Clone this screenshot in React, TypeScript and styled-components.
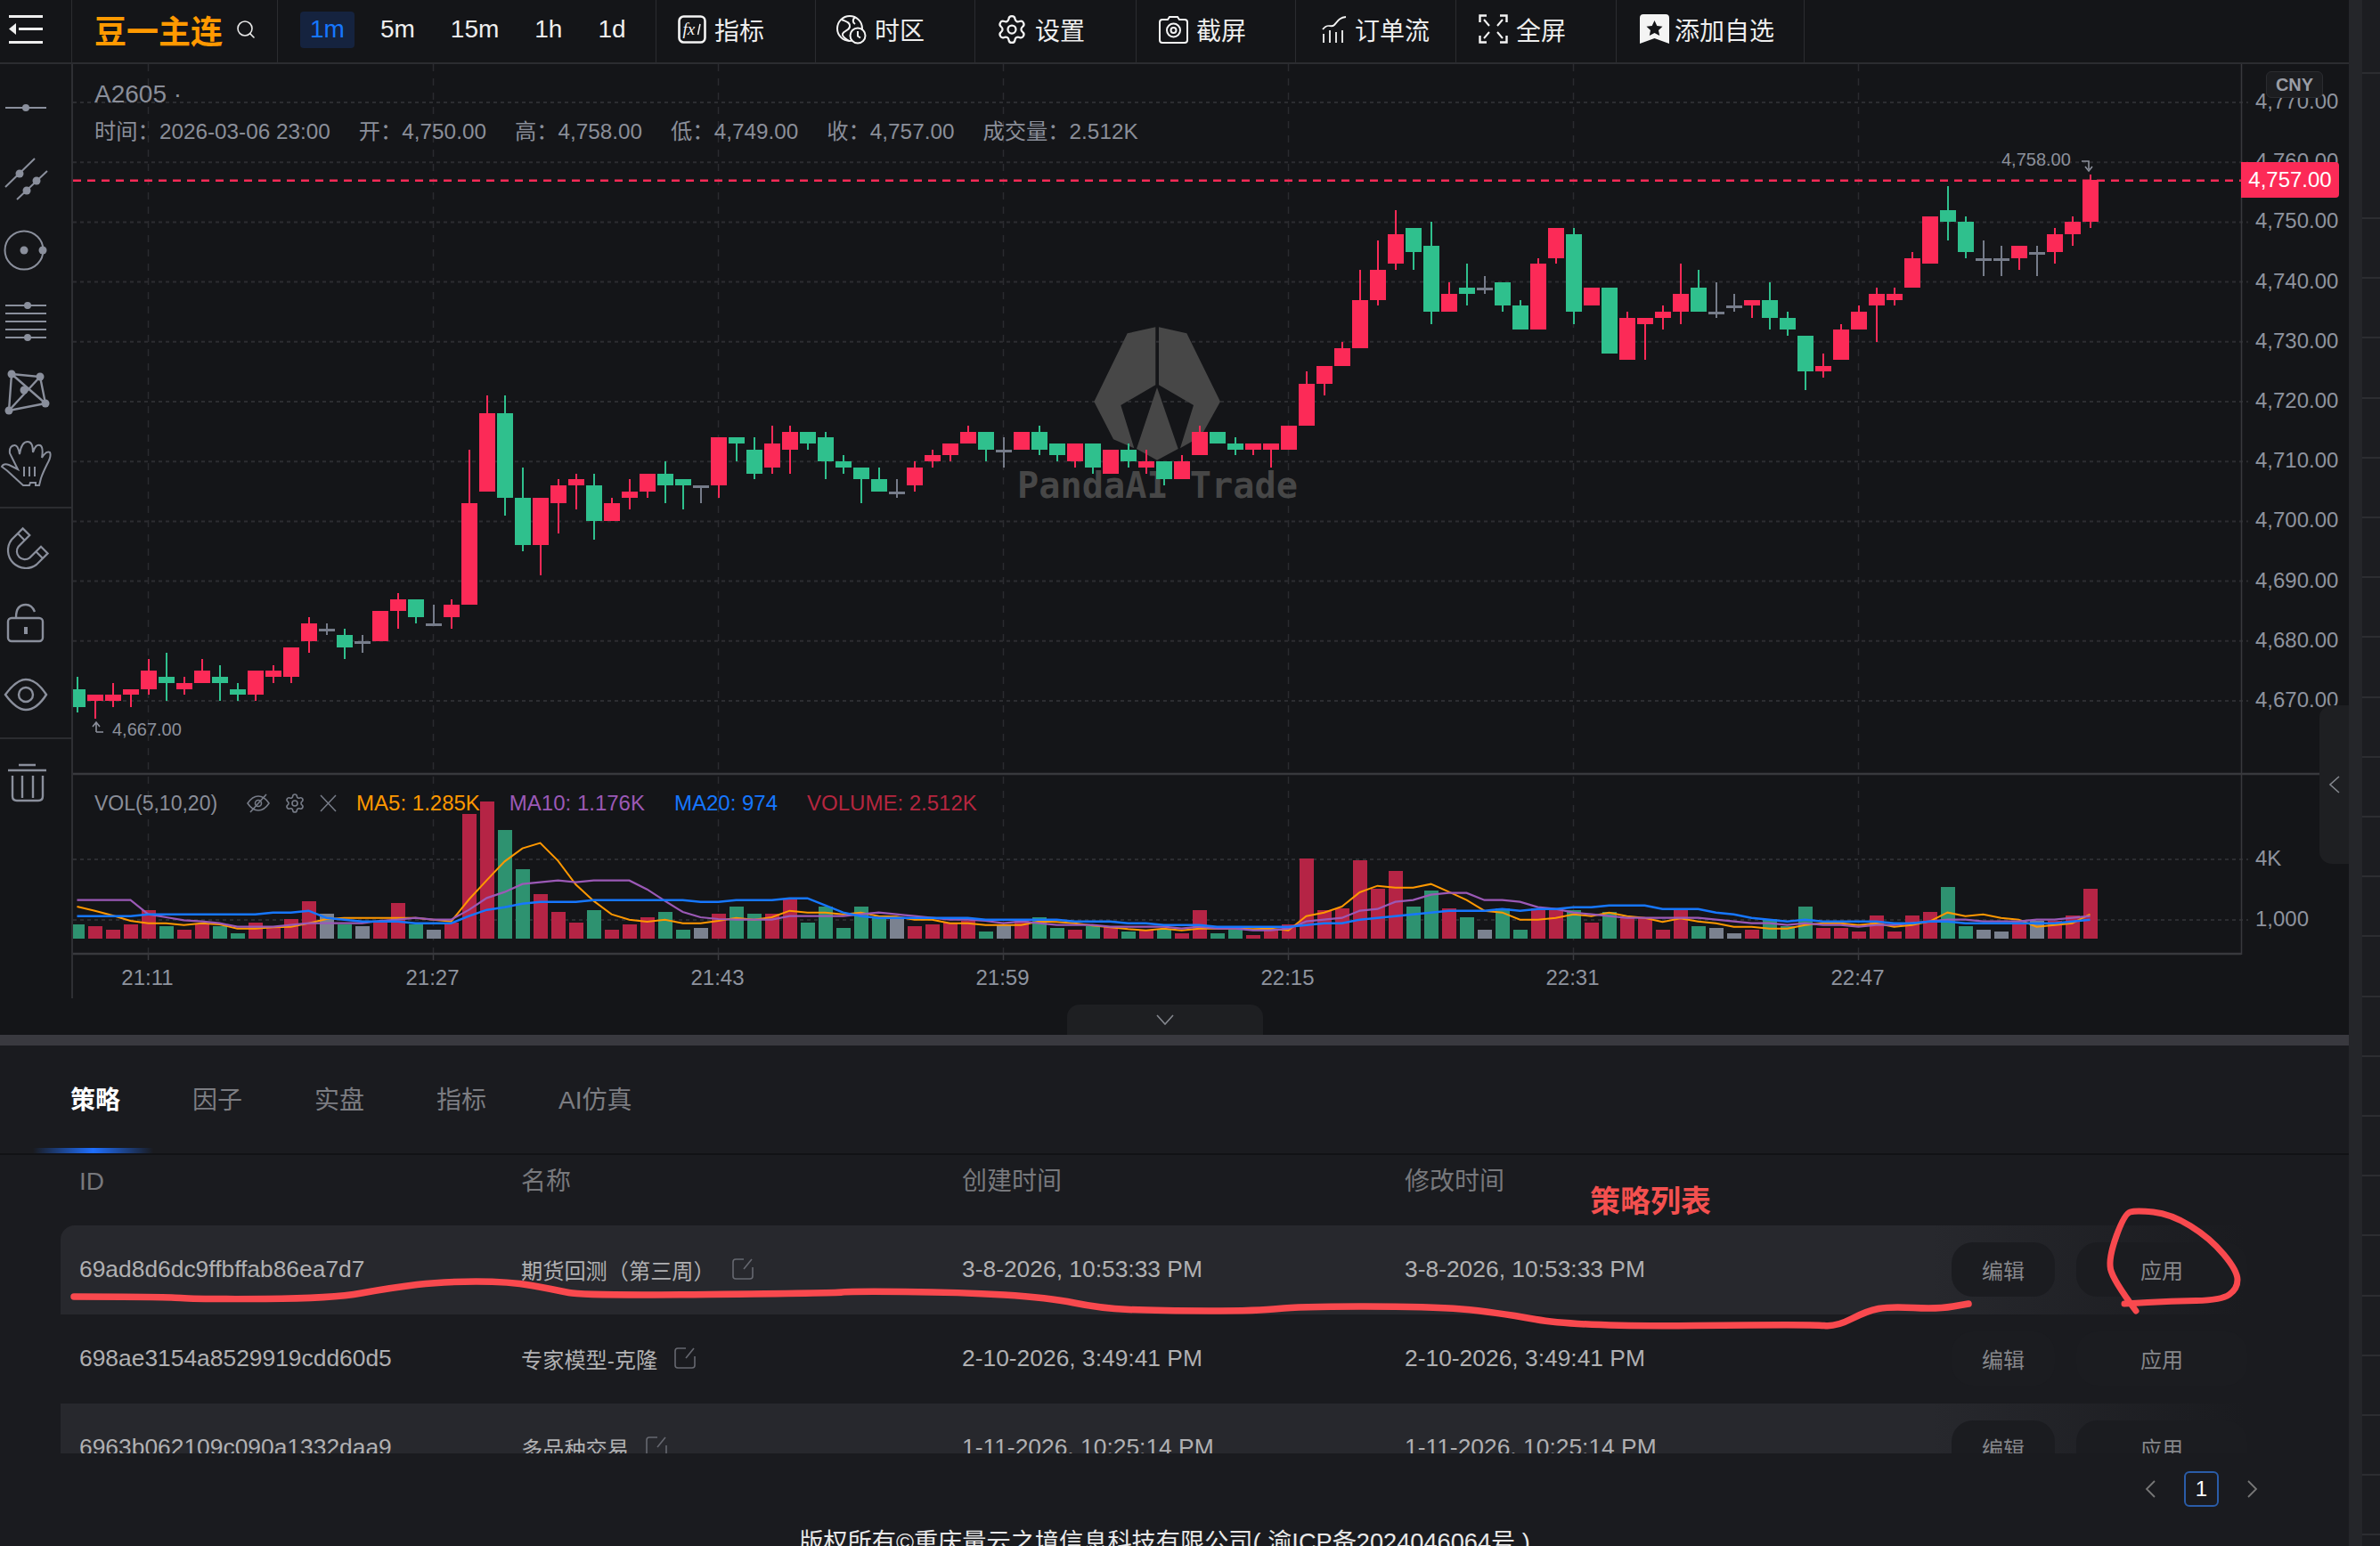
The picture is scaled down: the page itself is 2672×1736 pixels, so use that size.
import React from "react";
import styled, { createGlobalStyle } from "styled-components";
import { Search, Settings } from "lucide-react";

const FONT = `"Liberation Sans", "Noto Sans CJK SC", sans-serif`;
const UP = "#fc2a57";
const DOWN = "#2fc08d";
const FLAT = "#767c8a";
const VOL_COLORS: Record<string, string> = { r: "#b52445", g: "#2e9270", n: "#7b8290" };
const CANDLE_COLORS: Record<string, string> = { r: UP, g: DOWN, n: FLAT };

// [colour, body top, body bottom, high, low], in price units above 4670
type Candle = [string, number, number, number, number];
const candles: Candle[] = [
    ["g", 2, -1, 4, -2], ["r", 1, 0, 1, -3], ["r", 1, 0, 3, -1], ["r", 2, 1, 2, -1], ["r", 5, 2, 7, 1],
    ["g", 4, 3, 8, 0], ["r", 3, 2, 4, 1], ["r", 5, 3, 7, 3], ["g", 4, 3, 6, 0], ["g", 2, 1, 3, 0],
    ["r", 5, 1, 5, 0], ["r", 5, 4, 6, 3], ["r", 9, 4, 9, 3], ["r", 13, 10, 14, 8], ["n", 12, 12, 13, 11],
    ["g", 11, 9, 12, 7], ["n", 10, 10, 11, 8], ["r", 15, 10, 15, 10], ["r", 17, 15, 18, 12], ["g", 17, 14, 17, 13],
    ["n", 13, 13, 16, 13], ["r", 16, 14, 17, 12], ["r", 33, 16, 42, 16], ["r", 48, 35, 51, 35], ["g", 48, 34, 51, 31],
    ["g", 34, 26, 39, 25], ["r", 34, 26, 34, 21], ["r", 36, 33, 37, 28], ["r", 37, 36, 38, 32], ["g", 36, 30, 38, 27],
    ["r", 33, 30, 34, 30], ["r", 35, 34, 37, 32], ["r", 38, 35, 38, 34], ["g", 38, 36, 40, 33], ["g", 37, 36, 37, 32],
    ["n", 36, 36, 36, 33], ["r", 44, 36, 44, 34], ["g", 44, 43, 44, 40], ["g", 42, 38, 44, 37], ["r", 43, 39, 46, 38],
    ["r", 45, 42, 46, 38], ["g", 45, 43, 45, 42], ["g", 44, 40, 45, 37], ["g", 40, 39, 41, 38], ["g", 39, 37, 39, 33],
    ["g", 37, 35, 39, 35], ["n", 35, 35, 37, 34], ["r", 39, 36, 40, 35], ["r", 41, 40, 42, 39], ["r", 43, 41, 43, 40],
    ["r", 45, 43, 46, 43], ["g", 45, 42, 45, 40], ["n", 42, 42, 44, 39], ["r", 45, 42, 45, 42], ["g", 45, 42, 46, 41],
    ["g", 43, 41, 43, 40], ["r", 43, 40, 43, 39], ["g", 43, 39, 43, 38], ["r", 42, 38, 42, 38], ["g", 42, 40, 43, 39],
    ["r", 40, 39, 42, 38], ["g", 40, 37, 40, 36], ["r", 40, 37, 41, 37], ["r", 45, 41, 46, 41], ["g", 45, 43, 45, 43],
    ["g", 43, 42, 44, 41], ["r", 43, 42, 43, 41], ["r", 43, 42, 43, 39], ["r", 46, 42, 46, 42], ["r", 53, 46, 55, 46],
    ["r", 56, 53, 56, 51], ["r", 59, 56, 60, 56], ["r", 67, 59, 72, 59], ["r", 72, 67, 77, 66], ["r", 78, 73, 82, 72],
    ["g", 79, 75, 79, 72], ["g", 76, 65, 80, 63], ["r", 68, 65, 70, 65], ["g", 69, 68, 73, 66], ["n", 69, 69, 71, 68],
    ["g", 70, 66, 70, 65], ["g", 66, 62, 67, 62], ["r", 73, 62, 74, 62], ["r", 79, 74, 79, 73], ["g", 78, 65, 79, 63],
    ["r", 69, 66, 69, 66], ["g", 69, 58, 69, 58], ["r", 64, 57, 65, 57], ["r", 64, 63, 64, 57], ["r", 65, 64, 66, 62],
    ["r", 68, 65, 73, 63], ["g", 69, 65, 72, 65], ["n", 65, 65, 70, 64], ["n", 66, 66, 68, 65], ["r", 67, 66, 67, 64],
    ["g", 67, 64, 70, 62], ["g", 64, 62, 65, 61], ["g", 61, 55, 61, 52], ["r", 56, 55, 58, 54], ["r", 62, 57, 63, 57],
    ["r", 65, 62, 66, 62], ["r", 68, 66, 69, 60], ["r", 68, 67, 69, 66], ["r", 74, 69, 75, 69], ["r", 81, 73, 81, 73],
    ["g", 82, 80, 86, 77], ["g", 80, 75, 81, 74], ["n", 74, 74, 77, 71], ["n", 74, 74, 76, 71], ["r", 76, 74, 76, 72],
    ["n", 75, 75, 76, 71], ["r", 78, 75, 79, 73], ["r", 80, 78, 81, 76], ["r", 87, 80, 88, 79],
];

const volumes = [
    16, 14, 10, 16, 32, 14, 10, 16, 14, 6, 18, 12, 22, 42, 28, 16, 14, 20, 40, 16, 10, 18, 140, 154, 122, 78, 50, 30, 18, 32,
    10, 16, 24, 30, 10, 12, 28, 36, 28, 28, 44, 18, 36, 12, 36, 24, 22, 14, 16, 18, 20, 8, 16, 20, 24, 12, 10, 14, 14, 8,
    10, 10, 6, 32, 6, 10, 4, 10, 16, 90, 32, 34, 88, 56, 76, 36, 54, 34, 24, 10, 34, 10, 34, 34, 32, 18, 30, 24, 24, 10,
    32, 14, 12, 6, 10, 22, 14, 36, 12, 12, 8, 26, 8, 26, 30, 58, 14, 10, 8, 20, 20, 20, 26, 56,
];

// moving averages, y = 880 + value / 3, one value per candle
const ma5 = [
    414, 428, 444, 462, 470, 470, 476, 470, 474, 488, 488, 484, 482, 470, 456, 452, 452, 452, 452, 452, 458, 464, 390, 325, 262, 218, 200, 260, 340, 395,
    440, 458, 465, 458, 470, 470, 462, 452, 458, 450, 428, 434, 434, 440, 434, 446, 448, 458, 458, 470, 470, 476, 476, 476, 464, 466, 470, 478, 484, 490,
    494, 488, 494, 488, 488, 488, 490, 488, 494, 446, 434, 414, 366, 344, 350, 350, 338, 364, 392, 428, 434, 458, 458, 452, 440, 446, 434, 446, 452, 466,
    454, 464, 470, 482, 482, 488, 488, 476, 470, 470, 476, 470, 482, 476, 464, 434, 446, 440, 452, 458, 482, 476, 470, 440,
];
const ma10 = [
    392, 392, 392, 392, 440, 450, 460, 464, 470, 482, 482, 482, 476, 470, 470, 470, 470, 462, 458, 452, 458, 458, 425, 385, 365, 338, 332, 326, 332, 326,
    326, 326, 356, 395, 432, 450, 456, 458, 458, 458, 446, 446, 446, 446, 440, 434, 440, 446, 452, 458, 458, 462, 470, 464, 470, 476, 476, 476, 482, 482,
    482, 482, 488, 482, 488, 488, 494, 494, 488, 464, 458, 452, 428, 422, 398, 392, 374, 368, 368, 392, 392, 398, 416, 422, 434, 440, 446, 452, 452, 452,
    452, 452, 458, 464, 470, 470, 476, 470, 476, 476, 482, 476, 476, 470, 464, 458, 458, 464, 464, 464, 458, 458, 452, 446,
];
const ma20 = [
    446, 446, 446, 446, 440, 440, 440, 440, 440, 440, 440, 434, 434, 428, 452, 458, 464, 464, 464, 470, 470, 470, 446, 425, 416, 404, 398, 398, 398, 392,
    392, 392, 392, 392, 392, 398, 398, 392, 392, 392, 386, 386, 410, 434, 446, 452, 452, 452, 452, 452, 452, 458, 458, 458, 458, 458, 464, 464, 464, 470,
    470, 476, 476, 476, 482, 482, 482, 482, 482, 476, 470, 470, 458, 452, 446, 440, 434, 428, 428, 428, 422, 428, 422, 422, 416, 416, 410, 410, 410, 422,
    422, 422, 434, 440, 452, 458, 464, 458, 464, 464, 464, 464, 470, 470, 464, 464, 470, 470, 470, 470, 470, 470, 464, 458,
];

const candleX = (i: number) => 86.5 + 20 * i;
const priceY = (n: number) => 787 - n * 6.72;
const maPoints = (values: number[]) => values.map((v, i) => `${candleX(i)},${880 + v / 3}`).join(" ");

const smooth = (pts: number[][]) => {
    let d = `M${pts[0][0]} ${pts[0][1]}`;
    for (let i = 1; i < pts.length - 1; i++) {
        const mx = (pts[i][0] + pts[i + 1][0]) / 2;
        const my = (pts[i][1] + pts[i + 1][1]) / 2;
        d += ` Q${pts[i][0]} ${pts[i][1]} ${mx} ${my}`;
    }
    const last = pts[pts.length - 1];
    return `${d} L${last[0]} ${last[1]}`;
};

const underlineStroke = [
    [83, 1456], [182, 1456], [224, 1459], [373, 1458], [439, 1446], [497, 1439], [572, 1439], [622, 1448], [655, 1455],
    [937, 1452], [954, 1450], [1078, 1451], [1177, 1457], [1235, 1469], [1300, 1472], [1414, 1472], [1457, 1467], [1606, 1467],
    [1676, 1473], [1772, 1490], [2035, 1487], [2061, 1490], [2096, 1472], [2122, 1467], [2175, 1470], [2210, 1464],
];
const circleStroke = [
    [2398, 1472], [2372, 1437], [2367, 1413], [2385, 1363], [2398, 1359], [2437, 1363], [2481, 1390], [2512, 1427],
    [2512, 1447], [2494, 1460], [2437, 1461], [2385, 1464],
];

const priceTicks = [4770, 4760, 4750, 4740, 4730, 4720, 4710, 4700, 4690, 4680, 4670];
const timeTicks = [
    [4, "21:11"], [20, "21:27"], [36, "21:43"], [52, "21:59"], [68, "22:15"], [84, "22:31"], [100, "22:47"],
] as [number, string][];

const intervals = ["1m", "5m", "15m", "1h", "1d"];
const tabs = ["策略", "因子", "实盘", "指标", "AI仿真"];
const rows = [
    { id: "69ad8d6dc9ffbffab86ea7d7", name: "期货回测（第三周）", created: "3-8-2026, 10:53:33 PM", updated: "3-8-2026, 10:53:33 PM" },
    { id: "698ae3154a8529919cdd60d5", name: "专家模型-克隆", created: "2-10-2026, 3:49:41 PM", updated: "2-10-2026, 3:49:41 PM" },
    { id: "6963b062109c090a1332daa9", name: "多品种交易", created: "1-11-2026, 10:25:14 PM", updated: "1-11-2026, 10:25:14 PM" },
];

const formatPrice = (p: number) => `${Math.floor(p / 1000)},${String(p % 1000).padStart(3, "0")}.00`;

const PriceChart = () => (
    <ChartSvg viewBox="82 72 2555 1090" width={2555} height={1090}>
        {priceTicks.map((p) => (
            <line key={p} x1={82} x2={2524} y1={priceY(p - 4670)} y2={priceY(p - 4670)} stroke="#2c2d31" strokeWidth={2} strokeDasharray="4 4" />
        ))}
        <line x1={82} x2={2524} y1={965} y2={965} stroke="#2c2d31" strokeWidth={2} strokeDasharray="4 4" />
        <line x1={82} x2={2524} y1={1033} y2={1033} stroke="#2c2d31" strokeWidth={2} strokeDasharray="4 4" />
        {timeTicks.map(([i]) => (
            <g key={i}>
                <line x1={candleX(i)} x2={candleX(i)} y1={72} y2={1070} stroke="#2a2b2f" strokeWidth={1.5} strokeDasharray="8 8" />
                <line x1={candleX(i)} x2={candleX(i)} y1={1071} y2={1078} stroke="#3a3b3f" strokeWidth={1.5} />
            </g>
        ))}

        {/* watermark */}
        <g fill="#474747">
            <polygon points="1297.3,367.3 1265.7,374.3 1228.3,451 1250,493.3 1273.3,503.3 1258.3,455 1297.3,432.3" />
            <polygon points="1301,367.3 1332.3,374.3 1370,451 1348.3,490 1325,503.3 1340,455 1301,432.3" />
            <polygon points="1299,435 1322.7,504 1299,516.7 1276,504" />
        </g>
        <WatermarkText x={1142} y={559} textLength={315} lengthAdjust="spacingAndGlyphs">PandaAI Trade</WatermarkText>

        <g shapeRendering="crispEdges">
            {candles.map(([c, top, bottom, high, low], i) => {
                const x = candleX(i);
                const color = CANDLE_COLORS[c];
                return (
                    <g key={i} fill={color}>
                        <rect x={x - 1} width={2} y={priceY(high)} height={priceY(low) - priceY(high)} />
                        <rect x={x - 9} width={18} y={priceY(top)} height={Math.max(priceY(bottom) - priceY(top), 3)} />
                    </g>
                );
            })}
            {volumes.map((h, i) => (
                <rect key={i} x={candleX(i) - 8} width={16} y={1054 - h} height={h} fill={VOL_COLORS[candles[i][0]]} />
            ))}
        </g>

        <polyline points={maPoints(ma5)} fill="none" stroke="#ff9800" strokeWidth={2} />
        <polyline points={maPoints(ma10)} fill="none" stroke="#9b59b6" strokeWidth={2.2} />
        <polyline points={maPoints(ma20)} fill="none" stroke="#1677ff" strokeWidth={2.5} />

        <line x1={82} x2={2516} y1={202.7} y2={202.7} stroke={UP} strokeWidth={2.5} strokeDasharray="9 7" />

        <line x1={82} x2={2604} y1={869} y2={869} stroke="#38393d" strokeWidth={2.5} />
        <line x1={82} x2={2516} y1={1071} y2={1071} stroke="#38393d" strokeWidth={2.5} />
        <line x1={2516.5} x2={2516.5} y1={72} y2={1072} stroke="#38393d" strokeWidth={1.5} />

        {priceTicks.map((p) => (
            <AxisText key={p} x={2532} y={priceY(p - 4670) + 7}>{formatPrice(p)}</AxisText>
        ))}
        <AxisText x={2532} y={971.5}>4K</AxisText>
        <AxisText x={2532} y={1039.5}>1,000</AxisText>
        {timeTicks.map(([i, label]) => (
            <AxisText key={i} x={candleX(i) - 1} y={1106} textAnchor="middle">{label}</AxisText>
        ))}

        <MarkText x={2247} y={186}>4,758.00</MarkText>
        <path d="M2337 181H2345V190M2341 187L2345 192L2349 187" fill="none" stroke="#8c909c" strokeWidth={1.6} />
        <MarkText x={126} y={826}>4,667.00</MarkText>
        <path d="M108 822V812M104 816L108 811L112 816M108 822H116" fill="none" stroke="#8c909c" strokeWidth={1.6} />
    </ChartSvg>
);

const SidebarIcon = ({ children }: { children: React.ReactNode }) => (
    <ToolSlot>
        <svg width={60} height={80} viewBox="0 0 60 80" fill="none" stroke="#8a8f9c" strokeWidth={2}>
            {children}
        </svg>
    </ToolSlot>
);

const Dot = ({ cx, cy, r = 4.5 }: { cx: number; cy: number; r?: number }) => <circle cx={cx} cy={cy} r={r} fill="#8a8f9c" stroke="none" />;

const EditIcon = () => (
    <svg width={26} height={26} viewBox="0 0 26 26" fill="none" stroke="#666870" strokeWidth={1.6}>
        <path d="M14 2H5a3 3 0 0 0-3 3v16a3 3 0 0 0 3 3h16a3 3 0 0 0 3-3V11" />
        <path d="M14 13L23 2" />
    </svg>
);

export default function App() {
    return (
        <Page>
            <GlobalStyle />
            <Main>
                <TopBar>
                    <BarCell $width={81}>
                        <svg width={40} height={32} viewBox="0 0 40 32" fill="#eee">
                            <rect x="1" y="0" width="38" height="3" />
                            <rect x="12" y="14" width="27" height="3" />
                            <rect x="1" y="29" width="38" height="3" />
                            <polygon points="1,15.5 9,9 9,22" />
                        </svg>
                    </BarCell>
                    <SymbolCell>
                        <SymbolName>豆一主连</SymbolName>
                        <Search size={24} color="#e8e8e8" strokeWidth={1.6} />
                    </SymbolCell>
                    <IntervalCell>
                        {intervals.map((label, i) => (
                            <IntervalButton key={label} $active={i === 0}>{label}</IntervalButton>
                        ))}
                    </IntervalCell>
                    <ToolCell $width={179} $pad={24}>
                        <svg width={32} height={32} viewBox="0 0 32 32" fill="none" stroke="#f4f4f4" strokeWidth={2.6}>
                            <rect x="1.5" y="1.5" width="29" height="29" rx="5" />
                            <FxText x={5.5} y={22}>fx</FxText>
                            <path d="M25 10L22.500 22" strokeWidth={1.5} />
                        </svg>
                        <ToolLabel>指标</ToolLabel>
                    </ToolCell>
                    <ToolCell $width={179} $pad={23}>
                        <svg width={34} height={34} viewBox="0 0 34 34" fill="none" stroke="#f4f4f4" strokeWidth={2}>
                            <circle cx="15" cy="16" r="14" />
                            <path d="M6 6c4 2 10 3 9 8s-7 4-8 8 5 6 7 8M21 3c-3 3-3 6 0 8" />
                            <circle cx="24" cy="24" r="8.5" fill="#141518" />
                            <path d="M24 19v5.500l3 2" />
                        </svg>
                        <ToolLabel>时区</ToolLabel>
                    </ToolCell>
                    <ToolCell $width={181} $pad={23} $gap={8}>
                        <Settings size={36} color="#f4f4f4" strokeWidth={1.5} />
                        <ToolLabel>设置</ToolLabel>
                    </ToolCell>
                    <ToolCell $width={179} $pad={25}>
                        <svg width={33} height={32} viewBox="0 0 33 32" fill="none" stroke="#f4f4f4" strokeWidth={2}>
                            <path d="M10 5l2-3h9l2 3h6a3 3 0 0 1 3 3v20a3 3 0 0 1-3 3H4a3 3 0 0 1-3-3V8a3 3 0 0 1 3-3z" />
                            <circle cx="16.500" cy="17" r="7.500" />
                            <circle cx="16.500" cy="17" r="3" />
                        </svg>
                        <ToolLabel>截屏</ToolLabel>
                    </ToolCell>
                    <ToolCell $width={180} $pad={29}>
                        <svg width={28} height={30} viewBox="0 0 28 30" fill="none" stroke="#f4f4f4" strokeWidth={1.8}>
                            <path d="M2 30V20M9 30V16M16 30V18M23 30V16" />
                            <path d="M1 15C7 7 10 14 14 10S19 2 27 1" />
                        </svg>
                        <ToolLabel>订单流</ToolLabel>
                    </ToolCell>
                    <ToolCell $width={180} $pad={25}>
                        <svg width={33} height={33} viewBox="0 0 33 33" fill="none" stroke="#f4f4f4" strokeWidth={2.4}>
                            <path d="M9 1.500H1.500V9M24 1.500h7.500V9M9 31.500H1.500V24M24 31.500h7.500V24" />
                            <path d="M6 6l6 7M27 6l-6 7M6 27l6-7M27 27l-6-7" strokeWidth={2} />
                        </svg>
                        <ToolLabel>全屏</ToolLabel>
                    </ToolCell>
                    <ToolCell $width={211} $pad={26} $gap={6}>
                        <svg width={33} height={33} viewBox="0 0 33 33">
                            <path d="M4 0h25a4 4 0 0 1 4 4v29l-16.500-6L0 33V4a4 4 0 0 1 4-4z" fill="#f4f4f4" />
                            <polygon points="16.500,7 19.300,13 25.500,13.700 21,18 22.200,24 16.500,21 10.800,24 12,18 7.500,13.700 13.700,13" fill="#141518" />
                        </svg>
                        <ToolLabel>添加自选</ToolLabel>
                    </ToolCell>
                </TopBar>

                <ChartRow>
                    <Sidebar>
                        <ToolGroup $top={10} $bottom={10} $slot={79.5}>
                            <SidebarIcon>
                                <path d="M6 39H52" />
                                <Dot cx={29} cy={39} r={4} />
                            </SidebarIcon>
                            <SidebarIcon>
                                <path d="M6 49L39 17M19 63L53 31" />
                                <Dot cx={22} cy={34} />
                                <Dot cx={30} cy={53} />
                                <Dot cx={41} cy={42} />
                            </SidebarIcon>
                            <SidebarIcon>
                                <circle cx={27} cy={40} r={21.500} />
                                <Dot cx={27} cy={40} />
                                <Dot cx={48} cy={40} />
                            </SidebarIcon>
                            <SidebarIcon>
                                <path d="M6 23H52M6 32H52M6 41H52M6 50H52M6 59H52" />
                                <Dot cx={31} cy={23} r={4} />
                                <Dot cx={31} cy={59} r={4} />
                            </SidebarIcon>
                            <SidebarIcon>
                                <path d="M13 20L45 23L51 53L10 61ZM13 20L51 53M45 23L10 61" strokeWidth={2.4} />
                                <Dot cx={13} cy={20} />
                                <Dot cx={45} cy={23} />
                                <Dot cx={51} cy={53} />
                                <Dot cx={10} cy={61} />
                                <Dot cx={27} cy={38} />
                            </SidebarIcon>
                            <SidebarIcon>
                                <path d="M30 66H26L14 55Q8 49 2 45Q4 41 10 43L20 48L11 30Q10 22 16 21Q20 20 22 31Q24 17 31 17Q37 17 37 29Q40 19 45 21Q49 23 47 35Q52 27 56 29Q58 33 53 42Q48 52 46 58L44 66L40 66L40 63L34 63L33 66Z" />
                                <path d="M27 45V56M33 45V56M39 45V56" />
                            </SidebarIcon>
                        </ToolGroup>
                        <ToolGroup $top={7} $bottom={7} $slot={81} $divided>
                            <SidebarIcon>
                                <path d="M25.600 14.400L33.300 22L20.700 34.700A9 9 0 0 0 33.300 47.300L46 34.700L53.600 42.400L41 55A20 20 0 0 1 13 27ZM20 20L27.700 27.700M40.300 40.300L48 48" strokeWidth={2.2} />
                            </SidebarIcon>
                            <SidebarIcon>
                                <rect x={9} y={34} width={39} height={26} rx={4} strokeWidth={2.4} />
                                <path d="M18 33C18 24 22 19 29 19C34 19 37 22 39 27" strokeWidth={2.4} />
                                <rect x={27} y={44} width={4} height={8} fill="#8a8f9c" stroke="none" />
                            </SidebarIcon>
                            <SidebarIcon>
                                <path d="M6 39C14 28 21 22 29 22C37 22 45 28 52 39C45 50 37 56 29 56C21 56 14 50 6 39Z" strokeWidth={2.4} />
                                <circle cx={29} cy={39} r={8} strokeWidth={2.4} />
                            </SidebarIcon>
                        </ToolGroup>
                        <ToolGroup $top={9} $bottom={0} $slot={80} $divided>
                            <SidebarIcon>
                                <path d="M21 20H40M9 26H52" strokeWidth={2.4} />
                                <path d="M14 32V55Q14 60 19 60H43Q48 60 48 55V32M25 32V57M37 32V57" strokeWidth={2.4} />
                            </SidebarIcon>
                        </ToolGroup>
                    </Sidebar>

                    <ChartPanel>
                        <PriceChart />
                        <SymbolLegend>A2605 ·</SymbolLegend>
                        <OhlcLegend>
                            <span>时间：2026-03-06 23:00</span>
                            <span>开：4,750.00</span>
                            <span>高：4,758.00</span>
                            <span>低：4,749.00</span>
                            <span>收：4,757.00</span>
                            <span>成交量：2.512K</span>
                        </OhlcLegend>
                        <CurrencyBadge>CNY</CurrencyBadge>
                        <PriceTag>4,757.00</PriceTag>
                        <VolumeLegend>
                            <VolumeTitle>VOL(5,10,20)</VolumeTitle>
                            <LegendIcons>
                                <svg width={26} height={24} viewBox="0 0 26 24" fill="none" stroke="#777c88" strokeWidth={1.6}>
                                    <path d="M1 12C5 6 9 4 13 4s8 2 12 8c-4 6-8 8-12 8s-8-2-12-8z" />
                                    <circle cx="13" cy="12" r="3.500" />
                                    <path d="M22 2L4 22" />
                                </svg>
                                <Settings size={24} color="#777c88" strokeWidth={1.6} />
                                <svg width={19} height={20} viewBox="0 0 19 20" fill="none" stroke="#777c88" strokeWidth={1.5}>
                                    <path d="M1 1L18 19M18 1L1 19" />
                                </svg>
                            </LegendIcons>
                            <MaValue $color="#ff9800">MA5: 1.285K</MaValue>
                            <MaValue $color="#9b59b6">MA10: 1.176K</MaValue>
                            <MaValue $color="#1677ff">MA20: 974</MaValue>
                            <MaValue $color="#b5263f">VOLUME: 2.512K</MaValue>
                        </VolumeLegend>
                        <SideHandle>
                            <svg width={14} height={20} viewBox="0 0 14 20" fill="none" stroke="#85888f" strokeWidth={1.6}>
                                <path d="M12 1L2 10L12 19" />
                            </svg>
                        </SideHandle>
                        <BottomHandle>
                            <svg width={20} height={12} viewBox="0 0 20 12" fill="none" stroke="#85888f" strokeWidth={1.6}>
                                <path d="M1 1L10 11L19 1" />
                            </svg>
                        </BottomHandle>
                    </ChartPanel>
                </ChartRow>

                <SplitBar />

                <LowerPanel>
                    <TabBar>
                        {tabs.map((t, i) => (
                            <TabItem key={t} $active={i === 0}>{t}</TabItem>
                        ))}
                        <TabIndicator />
                    </TabBar>
                    <TableClip>
                        <HeaderRow>
                            <span>ID</span>
                            <span>名称</span>
                            <span>创建时间</span>
                            <span>修改时间</span>
                        </HeaderRow>
                        {rows.map((r, i) => (
                            <TableRow key={r.id} $striped={i % 2 === 0} $first={i === 0}>
                                <span>{r.id}</span>
                                <NameCell>
                                    {r.name}
                                    <EditIcon />
                                </NameCell>
                                <span>{r.created}</span>
                                <span>{r.updated}</span>
                                <Actions>
                                    <RowButton $width={116}>编辑</RowButton>
                                    <RowButton $width={192}>应用</RowButton>
                                </Actions>
                            </TableRow>
                        ))}
                    </TableClip>
                    <Pagination>
                        <svg width={12} height={20} viewBox="0 0 12 20" fill="none" stroke="#777" strokeWidth={1.8}>
                            <path d="M11 1L2 10L11 19" />
                        </svg>
                        <PageNumber>1</PageNumber>
                        <svg width={12} height={20} viewBox="0 0 12 20" fill="none" stroke="#777" strokeWidth={1.8}>
                            <path d="M1 1L10 10L1 19" />
                        </svg>
                    </Pagination>
                    <Footer>版权所有©重庆量云之境信息科技有限公司( 渝ICP备2024046064号 )</Footer>
                </LowerPanel>
            </Main>
            <Gutter />

            {/* red pen marks somebody drew over the screenshot */}
            <PenLayer viewBox="0 0 2672 1736" width={2672} height={1736}>
                <path d={smooth(underlineStroke)} fill="none" stroke="#f9494e" strokeWidth={7.5} strokeLinecap="round" strokeLinejoin="round" />
                <path d={smooth(circleStroke)} fill="none" stroke="#f9494e" strokeWidth={7} strokeLinecap="round" strokeLinejoin="round" />
            </PenLayer>
            <PenNote>策略列表</PenNote>
        </Page>
    );
}

const GlobalStyle = createGlobalStyle`
    html, body {
        margin: 0;
        padding: 0;
        background: #141518;
    }
    * {
        box-sizing: border-box;
    }
`;

const Page = styled.div`
    position: relative;
    display: flex;
    width: 2672px;
    height: 1736px;
    overflow: hidden;
    font-family: ${FONT};
    background: #141518;
`;

const Main = styled.div`
    display: flex;
    flex-direction: column;
    width: 2637px;
`;

const Gutter = styled.div`
    flex: 1;
    background-color: #1c1d21;
    border-left: 15px solid #25262a;
    background-image: linear-gradient(#2c2d31, #2c2d31),
        repeating-linear-gradient(#2c2d31 0, #2c2d31 2px, transparent 2px, transparent 67.2px);
    background-repeat: no-repeat;
    background-size: 100% 2px, 100% 1492px;
    background-position: 0 81px, 0 244px;
`;

const TopBar = styled.div`
    display: flex;
    flex: none;
    height: 72px;
    border-bottom: 2px solid #2b2c30;
`;

const BarCell = styled.div<{ $width: number }>`
    display: flex;
    flex: none;
    align-items: center;
    width: ${({ $width }) => $width}px;
    padding: 0 0 4px 9px;
    border-right: 1px solid #2b2c30;
`;

const SymbolCell = styled.div`
    display: flex;
    flex: none;
    align-items: center;
    gap: 14px;
    width: 231px;
    padding: 0 0 4px 25px;
    border-right: 1px solid #2b2c30;
`;

const SymbolName = styled.span`
    color: #ff9900;
    font-size: 36px;
    font-weight: 700;
`;

const IntervalCell = styled.div`
    display: flex;
    flex: none;
    align-items: center;
    gap: 18px;
    width: 425px;
    padding: 0 0 4px 25px;
    border-right: 1px solid #2b2c30;
`;

const IntervalButton = styled.div<{ $active?: boolean }>`
    display: flex;
    align-items: center;
    height: 41px;
    padding: 0 11px;
    border-radius: 4px;
    font-size: 28px;
    color: ${({ $active }) => ($active ? "#1677ff" : "#eeeeee")};
    background: ${({ $active }) => ($active ? "#15233f" : "transparent")};
`;

const ToolCell = styled.div<{ $width: number; $pad: number; $gap?: number }>`
    display: flex;
    flex: none;
    align-items: center;
    gap: ${({ $gap }) => $gap ?? 9}px;
    width: ${({ $width }) => $width}px;
    padding: 0 0 5px ${({ $pad }) => $pad}px;
    border-right: 1px solid #2b2c30;
`;

const ToolLabel = styled.span`
    color: #eeeeee;
    font-size: 28px;
`;

const FxText = styled.text`
    font-family: "Liberation Serif", serif;
    font-style: italic;
    font-size: 19px;
    fill: #f4f4f4;
    stroke: none;
`;

const ChartRow = styled.div`
    display: flex;
    flex: none;
    height: 1090px;
`;

const Sidebar = styled.div`
    flex: none;
    width: 82px;
    height: 1049px;
    border-right: 2px solid #2e2f33;
`;

const ToolGroup = styled.div<{ $top: number; $bottom: number; $slot: number; $divided?: boolean }>`
    display: grid;
    grid-auto-rows: ${({ $slot }) => $slot}px;
    padding: ${({ $top }) => $top}px 0 ${({ $bottom }) => $bottom}px;
    border-top: ${({ $divided }) => ($divided ? "2px solid #2b2c30" : "none")};
`;

const ToolSlot = styled.div`
    display: flex;
    align-items: center;
`;

const ChartPanel = styled.div`
    position: relative;
    flex: 1;
    min-width: 0;
`;

const ChartSvg = styled.svg`
    display: block;
`;

const AxisText = styled.text`
    font-family: ${FONT};
    font-size: 24px;
    fill: #8e939e;
`;

const MarkText = styled.text`
    font-family: ${FONT};
    font-size: 20px;
    fill: #8c909c;
`;

const WatermarkText = styled.text`
    font-family: "DejaVu Sans Mono", "Liberation Mono", monospace;
    font-weight: 700;
    font-size: 40px;
    fill: #474747;
`;

const SymbolLegend = styled.div`
    position: absolute;
    left: 24px;
    top: 17px;
    color: #8a8e99;
    font-size: 28px;
    line-height: 34px;
`;

const OhlcLegend = styled.div`
    position: absolute;
    left: 24px;
    top: 61px;
    display: flex;
    gap: 32px;
    color: #8a8e99;
    font-size: 24.3px;
    line-height: 30px;
    white-space: nowrap;
`;

const CurrencyBadge = styled.div`
    position: absolute;
    left: 2462px;
    top: 8px;
    display: flex;
    align-items: center;
    justify-content: center;
    width: 64px;
    height: 30px;
    border: 1px solid #2b2c30;
    border-radius: 6px;
    background: #1c1d20;
    color: #9a9da6;
    font-size: 20px;
    font-weight: 700;
`;

const PriceTag = styled.div`
    position: absolute;
    left: 2434px;
    top: 110px;
    display: flex;
    align-items: center;
    justify-content: center;
    width: 110px;
    height: 40px;
    border-radius: 0 4px 4px 0;
    background: ${UP};
    color: #ffffff;
    font-size: 24px;
`;

const VolumeLegend = styled.div`
    position: absolute;
    left: 24px;
    top: 815px;
    display: flex;
    align-items: center;
    gap: 33px;
    font-size: 24px;
    line-height: 30px;
    white-space: nowrap;
`;

const VolumeTitle = styled.span`
    color: #8a8e99;
    font-size: 23px;
`;

const LegendIcons = styled.div`
    display: flex;
    align-items: center;
    gap: 16px;
    margin-right: -11px;
`;

const MaValue = styled.span<{ $color: string }>`
    color: ${({ $color }) => $color};
`;

const SideHandle = styled.div`
    position: absolute;
    right: 0;
    top: 720px;
    display: flex;
    align-items: center;
    justify-content: center;
    width: 33px;
    height: 178px;
    border-radius: 14px 0 0 14px;
    background: #1e1f22;
`;

const BottomHandle = styled.div`
    position: absolute;
    left: 1116px;
    bottom: 0;
    display: flex;
    align-items: center;
    justify-content: center;
    width: 220px;
    height: 34px;
    border-radius: 14px 14px 0 0;
    background: #1e1f22;
`;

const SplitBar = styled.div`
    flex: none;
    height: 12px;
    background: #39393f;
`;

const LowerPanel = styled.div`
    display: flex;
    flex: 1;
    flex-direction: column;
    min-height: 0;
    background: #1a1b1f;
`;

const TabBar = styled.div`
    position: relative;
    display: flex;
    flex: none;
    align-items: center;
    gap: 81px;
    height: 123px;
    padding: 0 0 3px 79px;
    border-bottom: 2px solid #111215;
`;

const TabItem = styled.span<{ $active?: boolean }>`
    color: ${({ $active }) => ($active ? "#ffffff" : "#7c7d82")};
    font-size: 28px;
    font-weight: ${({ $active }) => ($active ? 700 : 400)};
`;

const TabIndicator = styled.div`
    position: absolute;
    left: 37px;
    bottom: 0;
    width: 135px;
    height: 6px;
    background: linear-gradient(90deg, transparent, #1f6fff 50%, transparent);
`;

const TableClip = styled.div`
    flex: none;
    height: 335px;
    margin: 0 68px;
    overflow: hidden;
`;

const HeaderRow = styled.div`
    display: grid;
    grid-template-columns: 496px 495px 497px 1fr;
    height: 79px;
    padding: 10px 0 0 21px;
    color: #77787c;
    font-size: 28px;
    line-height: 40px;
`;

const TableRow = styled.div<{ $striped?: boolean; $first?: boolean }>`
    display: grid;
    grid-template-columns: 496px 495px 497px 1fr auto;
    align-items: center;
    height: 100px;
    padding: 0 46px 2px 21px;
    color: #b0b0b2;
    font-size: 26.4px;
    background: ${({ $striped }) => ($striped ? "linear-gradient(90deg, #27282d 84%, #1a1b1f 98%)" : "transparent")};
    border-radius: ${({ $first }) => ($first ? "16px 16px 0 0" : "0")};
`;

const NameCell = styled.div`
    display: flex;
    align-items: center;
    gap: 18px;
    font-size: 24.2px;
`;

const Actions = styled.div`
    display: flex;
    align-items: center;
    gap: 24px;
    font-size: 24px;
`;

const RowButton = styled.div<{ $width: number }>`
    display: flex;
    align-items: center;
    justify-content: center;
    width: ${({ $width }) => $width}px;
    height: 61px;
    border-radius: 24px;
    background: #1b1c20;
    color: #85868a;
`;

const Pagination = styled.div`
    display: flex;
    flex: none;
    align-items: center;
    justify-content: flex-end;
    gap: 32px;
    padding: 20px 102px 0 0;
`;

const PageNumber = styled.div`
    display: flex;
    align-items: center;
    justify-content: center;
    width: 39px;
    height: 40px;
    border: 2px solid #2a5ca8;
    border-radius: 6px;
    color: #ffffff;
    font-size: 24px;
`;

const Footer = styled.div`
    flex: none;
    margin-top: 24px;
    padding-right: 22px;
    color: #e8e8e8;
    font-size: 27.2px;
    line-height: 32px;
    text-align: center;
    white-space: nowrap;
`;

const PenLayer = styled.svg`
    position: absolute;
    left: 0;
    top: 0;
    pointer-events: none;
`;

const PenNote = styled.div`
    position: absolute;
    left: 1785px;
    top: 1329px;
    color: #f4504f;
    font-size: 34px;
    font-weight: 700;
    line-height: 40px;
`;
